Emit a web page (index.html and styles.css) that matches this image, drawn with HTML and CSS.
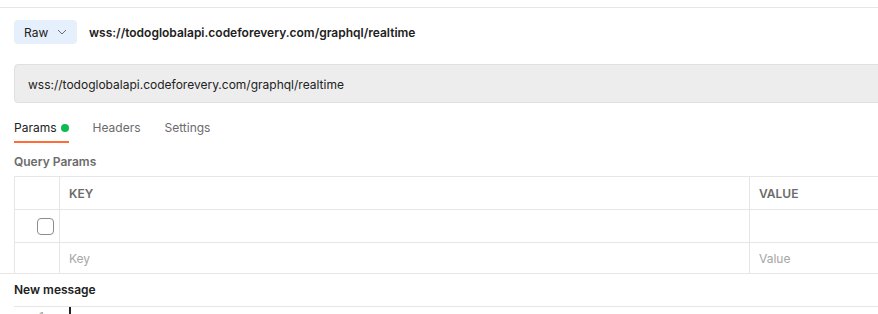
FILE: index.html
```html
<!DOCTYPE html>
<html lang="en">
<head>
    <meta charset="UTF-8">
    <title>WebSocket Request</title>
    <link rel="stylesheet" href="styles.css">
</head>
<body>
    <div class="divider"></div>
    <div class="ws-bar">
        <button class="mode-btn">Raw
            <svg width="10" height="6" viewBox="0 0 10 6"><path d="M1 1l4 4 4-4" fill="none" stroke="#6b6b6b" stroke-width="1"/></svg>
        </button>
        <span class="ws-title">wss://todoglobalapi.codeforevery.com/graphql/realtime</span>
    </div>

    <div class="url-box">wss://todoglobalapi.codeforevery.com/graphql/realtime</div>

    <nav class="tabs">
        <div class="tab active">Params <span class="dot"></span></div>
        <div class="tab">Headers</div>
        <div class="tab">Settings</div>
    </nav>

    <div class="section-label">Query Params</div>

    <div class="params">
        <div class="cell check-col"></div>
        <div class="cell head">KEY</div>
        <div class="cell head">VALUE</div>

        <div class="cell check-col"><span class="checkbox"></span></div>
        <div class="cell"></div>
        <div class="cell"></div>

        <div class="cell check-col last"></div>
        <div class="cell placeholder last">Key</div>
        <div class="cell placeholder last">Value</div>
    </div>

    <section class="message">
        <div class="message-title">New message</div>
        <div class="editor">
            <span class="line-no">1</span>
            <span class="caret"></span>
        </div>
    </section>
</body>
</html>
```

FILE: styles.css
```css
body {
    font-family: Inter, "Noto Sans", sans-serif;
    font-size: 12px;
    color: #212121;
    background-color: #ffffff;
    margin: 0;
    padding: 0;
    width: 878px;
    height: 314px;
    overflow: hidden;
}
.divider {
    margin-top: 7px;
    height: 1px;
    background-color: #e6e6e6;
}
.ws-bar {
    display: flex;
    align-items: center;
    padding: 12px 14px 0;
    gap: 12px;
}
.mode-btn {
    display: flex;
    align-items: center;
    gap: 9px;
    height: 24px;
    width: 63px;
    padding: 0 0 0 10px;
    border: none;
    border-radius: 4px;
    background-color: #e6effc;
    font-family: inherit;
    font-size: 12px;
    color: #212121;
}
.ws-title {
    font-weight: 600;
}
.url-box {
    margin: 20px 0 0 14px;
    width: 900px;
    height: 34px;
    line-height: 34px;
    padding: 3px 0 0 13px;
    background-color: #ededed;
    border: 1px solid #e0e0e0;
    border-radius: 4px;
}
.tabs {
    display: flex;
    gap: 24px;
    margin: 11px 14px 0;
}
.tab {
    display: flex;
    align-items: center;
    gap: 4px;
    padding: 6px 0 5px;
    line-height: 16px;
    color: #6b6b6b;
    border-bottom: 2px solid transparent;
}
.tab.active {
    color: #212121;
    border-bottom-color: #ff6c37;
}
.dot {
    width: 8px;
    height: 8px;
    border-radius: 50%;
    background-color: #0cbb52;
}
.section-label {
    margin: 11px 14px 0;
    line-height: 16px;
    font-weight: 600;
    color: #6b6b6b;
}
.params {
    display: grid;
    grid-template-columns: 45px 690px 200px;
    grid-template-rows: 33px 33px 30px;
    margin: 6px 0 0 14px;
    border-top: 1px solid #e6e6e6;
    border-left: 1px solid #e6e6e6;
}
.cell {
    display: flex;
    align-items: center;
    padding-left: 9px;
    border-bottom: 1px solid #e6e6e6;
    border-right: 1px solid #e6e6e6;
}
.cell.last {
    border-bottom: none;
}
.check-col {
    justify-content: flex-end;
    padding: 0 5px 0 0;
}
.head {
    font-weight: 600;
    color: #6b6b6b;
}
.placeholder {
    color: #a6a6a6;
}
.checkbox {
    width: 15px;
    height: 15px;
    border: 1px solid #8c8c8c;
    border-radius: 4px;
}
.message {
    border-top: 1px solid #e6e6e6;
}
.message-title {
    margin: 0 14px;
    line-height: 32px;
    font-weight: 600;
}
.editor {
    display: flex;
    align-items: flex-start;
    margin-left: 14px;
    height: 10px;
    border-top: 1px solid #e6e6e6;
}
.line-no {
    width: 30px;
    text-align: right;
    color: #a6a6a6;
    line-height: 16px;
    margin-top: 2px;
}
.caret {
    width: 2px;
    height: 16px;
    margin-left: 25px;
    background-color: #212121;
}
```
